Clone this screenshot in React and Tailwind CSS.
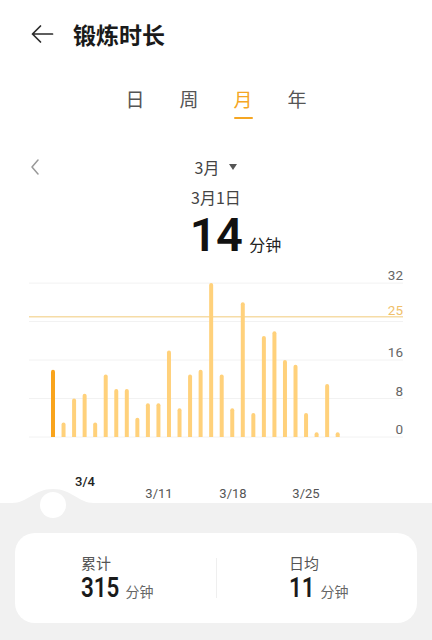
import React from "react";

const CJK = { fontFamily: '"Noto Sans CJK SC", "Noto Sans", sans-serif' };
const NUM = { fontFamily: 'Roboto, "Noto Sans", sans-serif' };

const DATA = [14, 3, 8, 9, 3, 13, 10, 10, 4, 7, 7, 18, 6, 13, 14, 32, 13, 6, 28, 5, 21, 22, 16, 15, 5, 1, 11, 1];

function Chart() {
  const top = 262;
  const base = 437 - top;
  const unit = 4.81;
  const x0 = 53;
  const step = 10.544;
  const gy = (v) => base - v * unit;
  return (
    <svg width="432" height="241" viewBox="0 0 432 241" className="block">
      <defs>
        <linearGradient id="vline" x1="0" y1="0" x2="0" y2="1">
          <stop offset="0" stopColor="#fdebc8" stopOpacity="0.6" />
          <stop offset="0.45" stopColor="#f9b445" stopOpacity="1" />
          <stop offset="0.8" stopColor="#fbd597" stopOpacity="0.8" />
          <stop offset="1" stopColor="#fdebc8" stopOpacity="0" />
        </linearGradient>
      </defs>
      {[0, 8, 16, 24, 32].map((v) => (
        <line key={v} x1="29" x2="403" y1={gy(v)} y2={gy(v)} stroke="#f2f2f2" strokeWidth="1" />
      ))}
      <line x1="29" x2="403" y1={gy(25)} y2={gy(25)} stroke="#f6dca6" strokeWidth="1.3" />
      <line x1={x0} x2={x0} y1={285 - top} y2={466 - top} stroke="url(#vline)" strokeWidth="1" />
      {DATA.map((v, i) => {
        const h = v * unit;
        const x = x0 + i * step - 2;
        return (
          <path
            key={i}
            d={`M${x} ${base} V${base - h + 2} Q${x} ${base - h} ${x + 2} ${base - h} Q${x + 4} ${base - h} ${x + 4} ${base - h + 2} V${base} Z`}
            fill={i === 0 ? "#f9a41c" : "#ffd17b"}
          />
        );
      })}
      <g style={NUM} fontSize="13.5" textAnchor="end">
        <text x="403" y={279.5 - top} fill="#666">32</text>
        <text x="403" y={314.5 - top} fill="#f0c06a">25</text>
        <text x="403" y={357 - top} fill="#666">16</text>
        <text x="403" y={395.5 - top} fill="#666">8</text>
        <text x="403" y={433.5 - top} fill="#666">0</text>
      </g>
      <g style={NUM} fontSize="13" textAnchor="middle">
        <text x="85" y={485.5 - top} fill="#222" fontWeight="500">3/4</text>
        <text x="159" y={497.5 - top} fill="#555">3/11</text>
        <text x="233" y={497.5 - top} fill="#555">3/18</text>
        <text x="306" y={497.5 - top} fill="#555">3/25</text>
      </g>
    </svg>
  );
}

function Stat({ label, value }) {
  const fs = 28;
  const w = value.length * 0.562 * fs;
  const k = 0.8;
  return (
    <div className="flex-1 flex justify-center pl-[4px]">
      <div className="flex flex-col">
        <div className="text-[15px] leading-[20px] text-[#555]" style={CJK}>{label}</div>
        <div className="flex items-baseline">
          <span
            className="inline-block origin-left scale-x-[0.8] text-[28px] leading-[30px] font-semibold text-[#1a1a1a]"
            style={{ ...NUM, marginRight: -(w * (1 - k)) }}
          >
            {value}
          </span>
          <span className="ml-[6px] text-[14px] leading-none text-[#666]" style={CJK}>分钟</span>
        </div>
      </div>
    </div>
  );
}

export default function App() {
  const tabs = ["日", "周", "月", "年"];
  return (
    <div className="w-[432px] h-[640px] overflow-hidden bg-white flex flex-col" style={CJK}>
      <div className="h-[68px] flex items-center pl-[30px] shrink-0">
        <svg width="24" height="24" viewBox="0 0 24 24" fill="none" stroke="#2a2a2a" strokeWidth="1.7" strokeLinecap="round" strokeLinejoin="round">
          <path d="M22.5 12H2.5M10.5 4L2.5 12L10.5 20" />
        </svg>
        <div className="ml-[19px] text-[23px] leading-[30px] font-semibold text-[#1a1a1a]">锻炼时长</div>
      </div>

      <div className="mt-[18px] flex justify-center gap-[34px] shrink-0">
        {tabs.map((t, i) => (
          <div key={t} className="flex flex-col items-center w-[20px]">
            <span className={`text-[19px] leading-[26px] ${i === 2 ? "text-[#f5a623]" : "text-[#555]"}`}>{t}</span>
            <span className={`mt-[5px] h-[2px] w-[19px] rounded-full ${i === 2 ? "bg-[#f5a623]" : "bg-transparent"}`} />
          </div>
        ))}
      </div>

      <div className="mt-[36px] h-[24px] flex items-center px-[30px] shrink-0">
        <div className="w-[20px] flex items-center">
          <svg width="10" height="16" viewBox="0 0 10 16" fill="none" stroke="#999" strokeWidth="1.5" strokeLinecap="round" strokeLinejoin="round">
            <path d="M8 1L2 8L8 15" />
          </svg>
        </div>
        <div className="flex-1 flex justify-center items-center">
          <span className="text-[16px] leading-[22px] text-[#444]">3月</span>
          <svg width="8" height="6" viewBox="0 0 8 6" className="ml-[10px]">
            <path d="M0 0H8L4 6Z" fill="#555" />
          </svg>
        </div>
        <div className="w-[20px]" />
      </div>

      <div className="mt-[8px] text-center text-[16px] leading-[20px] text-[#444] shrink-0">3月1日</div>

      <div className="mt-[5px] h-[46px] flex justify-center items-baseline shrink-0">
        <span className="invisible text-[16px] leading-none mr-[7px]">分钟</span>
        <span className="text-[47px] leading-[46px] font-semibold text-[#111] tracking-[-0.5px]" style={NUM}>14</span>
        <span className="ml-[7px] text-[16px] leading-none text-[#222]">分钟</span>
      </div>

      <div className="mt-[4px] shrink-0">
        <Chart />
      </div>

      <div className="relative flex-1 bg-[#f1f1f1] pt-[30px] px-[15px]">
        <svg width="120" height="32" viewBox="0 0 120 32" className="absolute left-0 top-[-16px]">
          <path d="M12 16 C28 16 34 2 53 2 C72 2 78 16 94 16 Z" fill="#f1f1f1" />
          <circle cx="53" cy="18" r="13" fill="#ffffff" />
        </svg>
        <div className="h-[90px] bg-white rounded-[20px] flex items-start pt-[20px] relative">
          <Stat label="累计" value="315" />
          <div className="w-px h-[40px] bg-[#efefef] mt-[5px]" />
          <Stat label="日均" value="11" />
        </div>
      </div>
    </div>
  );
}
